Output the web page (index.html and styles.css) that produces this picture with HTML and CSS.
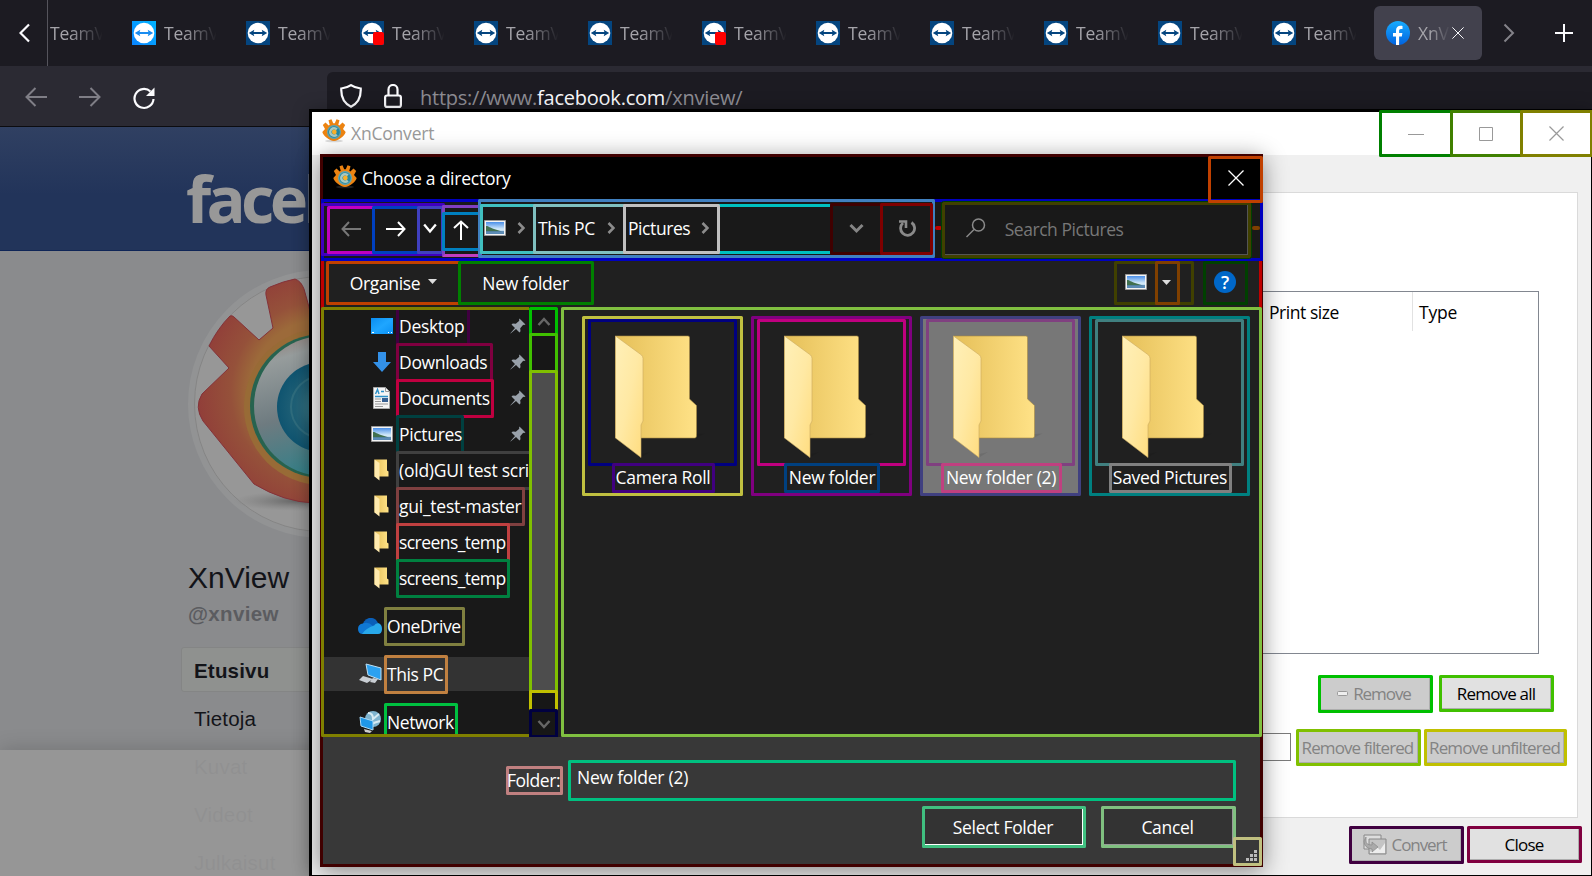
FILE: index.html
```
<!DOCTYPE html>
<html lang="en">
<head>
<meta charset="utf-8">
<title>XnConvert - Choose a directory</title>
<link rel="stylesheet" href="styles.css">
</head>
<body>
<svg class="defs" width="0" height="0">
  <defs>
    <linearGradient id="tvLight" x1="1" y1="0" x2="0" y2="1"><stop offset="0" stop-color="#00b4ff"/><stop offset="1" stop-color="#0a84ff"/></linearGradient>
    <linearGradient id="fb" x1="0" y1="0" x2="0" y2="1"><stop offset="0" stop-color="#18acfe"/><stop offset="1" stop-color="#0163e0"/></linearGradient>
    <linearGradient id="fBack" x1="0" y1="0" x2="1" y2="0"><stop offset="0" stop-color="#e5bf58"/><stop offset="1" stop-color="#ffe287"/></linearGradient>
    <linearGradient id="fFront" x1="0" y1="0" x2="1" y2="1"><stop offset="0" stop-color="#fff0b8"/><stop offset=".5" stop-color="#ffe9a4"/><stop offset="1" stop-color="#ffdc7e"/></linearGradient>
    <linearGradient id="sky" x1="0" y1="0" x2="0" y2="1"><stop offset="0" stop-color="#4a8fe8"/><stop offset=".6" stop-color="#d5ebfa"/><stop offset="1" stop-color="#8fb6d8"/></linearGradient>
    <linearGradient id="desk" x1="0" y1="0" x2="1" y2="1"><stop offset="0" stop-color="#0a8df0"/><stop offset=".5" stop-color="#1fa6ff"/><stop offset="1" stop-color="#0a90f4"/></linearGradient>
    <radialGradient id="gear" gradientUnits="userSpaceOnUse" cx="134" cy="122" r="134"><stop offset=".54" stop-color="#9c6a3a"/><stop offset=".68" stop-color="#95513a"/><stop offset="1" stop-color="#903939"/></radialGradient>
    <linearGradient id="ring" x1="0" y1="0" x2=".3" y2="1"><stop offset="0" stop-color="#90766e"/><stop offset=".2" stop-color="#969c9c"/><stop offset=".6" stop-color="#6e7b80"/><stop offset="1" stop-color="#357f88"/></linearGradient>
    <radialGradient id="iris"><stop offset="0" stop-color="#45858f"/><stop offset=".5" stop-color="#256478"/><stop offset="1" stop-color="#0f5470"/></radialGradient>
    <radialGradient id="shade"><stop offset="0" stop-color="#555" stop-opacity=".8"/><stop offset="1" stop-color="#777" stop-opacity="0"/></radialGradient>
    <symbol id="tv" viewBox="0 0 24 24"><circle cx="12" cy="12" r="10.3" fill="#fff"/><path d="M2.8 12 8.3 8.8 7.6 11h8.8l-.7-2.2L21.2 12l-5.5 3.2.7-2.2H7.6l.7 2.2z" fill="currentColor"/></symbol>
    <symbol id="pic" viewBox="0 0 22 16"><path fill="#f4f4f4" stroke="#999" d="M.5.5h21v15H.5z"/><path fill="url(#sky)" d="M2 2h18v12H2z"/><path fill="#41704f" d="M2 6c3 0 4 2 8 3l8 2.500H2z"/><path fill="#3f73a4" d="M2 11h18v3H2z" opacity=".7"/></symbol>
    <symbol id="smallFolder" viewBox="0 0 16 22"><path d="M.5.5H13v11l1.500 1v5H.5z" fill="url(#fBack)"/><path d="M.5.5 5.500 4v17.500L.5 17.500z" fill="#ffeaae"/></symbol>
    <symbol id="bigFolder" viewBox="0 0 90 124"><path d="M.5 1H73a1.5 1.5 0 0 1 1.5 1.5V64l7 6.500V101a2 2 0 0 1-2 2H.5z" fill="url(#fBack)" stroke="#a98c45" stroke-width=".6"/><path d="m81.500 99 8-.5-8 4zM26 119l9-2-8 5z" fill="#000" opacity=".08"/><path d="M.5 1 26.500 20a5 5 0 0 1 1.500 3.500V86l-2 4v32.500L.5 103z" fill="url(#fFront)" stroke="#c9a95f" stroke-width=".6"/></symbol>
    <symbol id="pin" viewBox="0 0 16 16"><path d="m9.500.5 6 6-1.500.5-.8-.3-3 3.500.3 3-1 1.300L6 11 .6 15.500.4 15.300 5 10 1.500 6.500l1.300-1 3 .3 3.500-3L9 1.900z" fill="#99a1aa"/></symbol>
    <symbol id="crumb" viewBox="0 0 8 12"><path d="m1.500 1 5 5-5 5" fill="none" stroke="#8c8c8c" stroke-width="2.600"/></symbol>
    <symbol id="app" viewBox="0 0 24 24"><ellipse cx="12" cy="22" rx="9" ry="1.300" fill="#777" opacity=".25"/><path d="M.8 6 3.500 3.500l3.200 3 1-.8L6.500 1.300 9.500.3l1.700 4h1.600l1.700-4 3 1-1.200 4.400 1 .8 3.200-3L23.200 6l-2.200 4 2.700 3c-1 3.500-7 9-11.700 9S1.300 16.500.3 13L3 10z" fill="#ec8311"/><circle cx="12" cy="13" r="7" fill="#5fa5b3"/><circle cx="12" cy="13" r="5.800" fill="#2587a0"/><path d="M14.800 10.400a3.800 3.800 0 1 0 0 5.200" fill="none" stroke="#a9c9c2" stroke-width="2.400"/><circle cx="12.300" cy="13" r="2.400" fill="#f7b02a"/></symbol>
    <symbol id="down" viewBox="0 0 12 10"><path d="m1 2 5 6 5-6" fill="none" stroke="currentColor" stroke-width="2"/></symbol>
    <symbol id="x" viewBox="0 0 16 16"><path d="m.5.5 15 15m0-15-15 15" fill="none" stroke="currentColor" stroke-width="1.300"/></symbol>
  </defs>
</svg>

<div class="browser">
  <div class="tabs">
    <div class="scroll-left"><svg width="12" height="20" viewBox="0 0 12 20"><path d="m10 1.500-8.500 8.500 8.500 8.500" fill="none" stroke="#fbfbfe" stroke-width="2.200"/></svg></div>
    <div class="tab first"><span>TeamV</span></div>
    <div class="tab"><svg class="fav light"><rect width="24" height="24" fill="url(#tvLight)"/><use href="#tv"/></svg><span>TeamV</span></div>
    <div class="tab"><svg class="fav"><use href="#tv"/></svg><span>TeamV</span></div>
    <div class="tab"><svg class="fav"><use href="#tv"/><rect x="13" y="11" width="11" height="13" rx="2" fill="#f00"/></svg><span>TeamV</span></div>
    <div class="tab"><svg class="fav"><use href="#tv"/></svg><span>TeamV</span></div>
    <div class="tab"><svg class="fav"><use href="#tv"/></svg><span>TeamV</span></div>
    <div class="tab"><svg class="fav"><use href="#tv"/><rect x="13" y="11" width="11" height="13" rx="2" fill="#f00"/></svg><span>TeamV</span></div>
    <div class="tab"><svg class="fav"><use href="#tv"/></svg><span>TeamV</span></div>
    <div class="tab"><svg class="fav"><use href="#tv"/></svg><span>TeamV</span></div>
    <div class="tab"><svg class="fav"><use href="#tv"/></svg><span>TeamV</span></div>
    <div class="tab"><svg class="fav"><use href="#tv"/></svg><span>TeamV</span></div>
    <div class="tab"><svg class="fav"><use href="#tv"/></svg><span>TeamV</span></div>
    <div class="tab active"><svg class="fav none" viewBox="0 0 24 24"><circle cx="12" cy="12" r="12" fill="url(#fb)"/><path d="M10 24v-8.500H7V12h3V9.500C10 6.300 11.800 4.700 14.500 4.700c1 0 2 .2 2 .2V8H15c-1.400 0-1.900.8-1.900 1.800V12h3.300l-.6 3.500h-2.700V24z" fill="#fff"/></svg><span>XnV</span><svg class="tab-x" width="12" height="12"><use href="#x"/></svg></div>
    <svg class="scroll-right" width="12" height="20" viewBox="0 0 12 20"><path d="m1.500 1.500 8.500 8.500-8.500 8.500" fill="none" stroke="#84838a" stroke-width="2"/></svg>
    <svg class="plus" width="18" height="18"><path d="M9 0v18M0 9h18" stroke="#fbfbfe" stroke-width="2"/></svg>
  </div>
  <div class="nav">
    <svg width="22" height="20" viewBox="0 0 22 20"><path d="M22 10H2M10.500 1 1.500 10l9 9" fill="none" stroke="#7f7e86" stroke-width="2"/></svg>
    <svg width="22" height="20" viewBox="0 0 22 20"><path d="M0 10h20M11.500 1l9 9-9 9" fill="none" stroke="#7f7e86" stroke-width="2"/></svg>
    <svg class="reload" width="24" height="24" viewBox="0 0 24 24"><path d="M18.500 5.500A9.500 9.500 0 1 0 21.500 13" fill="none" stroke="#fbfbfe" stroke-width="2.200"/><path d="M22.500 1.500V10H14z" fill="#fbfbfe"/></svg>
    <div class="urlbar">
      <svg width="22" height="24" viewBox="0 0 22 24"><path d="M11 1.200c3 2.100 6.500 3 9.700 3.300.4 8-2 14.500-9.700 18.200C3.300 19 .9 12.500 1.300 4.500 4.500 4.200 8 3.300 11 1.200z" fill="none" stroke="#fbfbfe" stroke-width="2.200"/></svg>
      <svg width="18" height="24" viewBox="0 0 18 24"><path d="M4.500 11V5.500a4.500 4.500 0 0 1 9 0V11" fill="none" stroke="#fbfbfe" stroke-width="2.200"/><rect x="1.100" y="11.500" width="15.800" height="11.400" rx="2" fill="none" stroke="#fbfbfe" stroke-width="2.200"/></svg>
      <span class="url">https://www.<b>facebook.com</b>/xnview/</span>
    </div>
  </div>
  <div class="page">
    <div class="fb-head"><span>facebook</span></div>
    <div class="profile">
      <svg class="avatar" width="268" height="268" viewBox="0 0 268 268">
        <circle cx="134" cy="134" r="131" fill="#979797" stroke="#929394" stroke-width="6"/>
        <circle cx="134" cy="134" r="127.500" fill="none" stroke="#858585"/>
        <ellipse cx="110" cy="231" rx="65" ry="10" fill="url(#shade)"/>
        <path d="M14 124 41 98 21 76Q30 58 42 46q2-1 4 1l25 23 14-12-7-33q-1-6 4-8 14-6 25-8 6 2 9 10l5 18 5 24V233q-30-1-60-19L15 151q-9-14-1-27z" fill="url(#gear)" stroke="#843239" stroke-width="1"/>
        <circle cx="134" cy="137" r="78" fill="#986b36"/>
        <circle cx="134" cy="136" r="72" fill="#27634f"/>
        <circle cx="136" cy="136" r="70" fill="url(#ring)"/>
        <circle cx="134" cy="137" r="45" fill="url(#iris)"/>
        <circle cx="134" cy="137" r="31" fill="none" stroke="#2f6c7d" stroke-width="2"/>
      </svg>
      <h1>XnView</h1>
      <p class="handle">@xnview</p>
      <div class="fb-item on">Etusivu</div>
      <div class="fb-item">Tietoja</div>
      <div class="fb-item">Kuvat</div>
      <div class="fb-item">Videot</div>
      <div class="fb-item">Julkaisut</div>
    </div>
    <div class="sheet"></div>
  </div>
</div>

<div class="window">
  <div class="titlebar">
    <svg width="24" height="24"><use href="#app"/></svg><span class="wtitle">XnConvert</span>
    <div class="mark wbtn" style="border-color:#008000"><svg width="16" height="16"><path d="M0 8.500h16" stroke="#999"/></svg></div>
    <div class="mark wbtn mid" style="border-color:#408000"><svg width="16" height="16"><path d="M1.500 1.500h13v13h-13z" fill="none" stroke="#999"/></svg></div>
    <div class="mark wbtn last" style="border-color:#808000"><svg class="grey" width="15" height="15"><use href="#x"/></svg></div>
  </div>
  <div class="wbody">
    <div class="panel">
      <div class="table"><span class="col">Print size</span><span class="col type">Type</span></div>
      <div class="row first-row">
        <div class="mark btn off w115" style="border-color:#00c000"><svg width="12" height="6"><rect x=".5" y=".5" width="10" height="4" rx="1" fill="#eee" stroke="#999"/></svg>Remove</div>
        <div class="mark btn short w115" style="border-color:#40c000">Remove all</div>
      </div>
      <div class="row second-row">
        <div class="filter"></div>
        <div class="mark btn off tight w126" style="border-color:#80c000">Remove filtered</div>
        <div class="mark btn off tight w144" style="border-color:#c0c000">Remove unfiltered</div>
      </div>
    </div>
    <div class="row foot">
      <div class="mark btn off w115" style="border-color:#400040"><svg width="24" height="22" viewBox="0 0 24 22"><path d="M1 1h17v14H1z" fill="#ddd" stroke="#888"/><path d="M6 5h17v15H6z" fill="#c4c4c4" stroke="#888"/><path d="M7 18l6-6 4 4 5-7v10H7z" fill="#eee"/><path d="M3 3v4q0 4 6 4V8l6 5-6 5v-3Q1 14 1 7z" fill="#aaa" stroke="#888" stroke-width=".7"/></svg>Convert</div>
      <div class="mark btn short w115" style="border-color:#800040">Close</div>
    </div>
  </div>
</div>

<div class="dialog">
  <div class="dtitle"><svg width="24" height="24"><use href="#app"/></svg><span>Choose a directory</span>
    <div class="mark dclose"><svg width="16" height="16"><use href="#x"/></svg></div></div>
  <div class="addr">
    <div class="mark history">
      <div class="mark h48" style="border-color:#c000c0"><svg width="20" height="16" viewBox="0 0 20 16"><path d="M20 8H1.500M8 1 1.500 8 8 15" fill="none" stroke="#777" stroke-width="2"/></svg></div>
      <div class="mark h48" style="border-color:#0040c0"><svg width="20" height="16" viewBox="0 0 20 16"><path d="M0 8h18.500M12 1l6.500 7-6.500 7" fill="none" stroke="#fff" stroke-width="2"/></svg></div>
      <div class="mark h27" style="border-color:#4040c0"><svg class="white" width="14" height="12"><use href="#down"/></svg></div>
    </div>
    <div class="mark upbox"><div class="mark up"><svg width="16" height="20" viewBox="0 0 16 20"><path d="M8 20V1.500M1 8l7-6.500L15 8" fill="none" stroke="#fff" stroke-width="2"/></svg></div></div>
    <div class="mark band">
      <div class="mark crumbs">
        <div class="mark c1"><svg width="22" height="16"><use href="#pic"/></svg><svg width="8" height="12"><use href="#crumb"/></svg></div>
        <div class="mark c2"><span>This PC</span><svg width="8" height="12"><use href="#crumb"/></svg></div>
        <div class="mark c3"><span>Pictures</span><svg width="8" height="12"><use href="#crumb"/></svg></div>
      </div>
      <div class="mark a1"><svg width="15" height="11" viewBox="0 0 15 11"><path d="m1.500 2 6 6 6-6" fill="none" stroke="#858585" stroke-width="3"/></svg></div>
      <div class="mark a2"><svg width="18" height="18" viewBox="0 0 18 18"><path d="M13.500 2.500a7 7 0 1 1-8.500.5" fill="none" stroke="#8a8a8a" stroke-width="2.800"/><path d="M1 1.500h7v6.500" fill="none" stroke="#8a8a8a" stroke-width="2.600"/></svg></div>
    </div>
    <div class="dash"></div>
    <div class="mark search"><div class="field"><svg width="20" height="20" viewBox="0 0 20 20"><circle cx="12.500" cy="7" r="6" fill="none" stroke="#8a8a8a" stroke-width="1.500"/><path d="m8 11.500-7.500 7.500" stroke="#8a8a8a" stroke-width="1.500"/></svg><span>Search Pictures</span></div></div>
    <div class="dash brown"></div>
  </div>
  <div class="tools">
    <div class="mark organise"><span>Organise</span><svg width="9" height="5"><path d="M0 0h9L4.500 5z" fill="#ddd"/></svg></div>
    <div class="mark newf">New folder</div>
    <div class="mark views"><svg width="22" height="16"><use href="#pic"/></svg><div class="mark drop"><svg width="9" height="5"><path d="M0 0h9L4.500 5z" fill="#ddd"/></svg></div></div>
    <div class="mark help"><i>?</i></div>
  </div>
  <div class="main">
    <div class="mark tree">
      <div class="item"><svg width="22" height="16"><path d="M0 0h22v16H0z" fill="url(#desk)"/><path d="M1 14.500h2m14 0h1m2 0h1" stroke="#fff"/></svg><b class="mark" style="border-color:#400040;width:74px">Desktop</b><svg class="pin"><use href="#pin"/></svg></div>
      <div class="item"><svg width="22" height="20" viewBox="0 0 22 20"><path d="M7 0h8v10h5l-9 10L2 10h5z" fill="#3391e8"/></svg><b class="mark" style="border-color:#800040;width:97px">Downloads</b><svg class="pin"><use href="#pin"/></svg></div>
      <div class="item"><svg width="22" height="22" viewBox="0 0 22 22"><path d="M2.500.5h12l4 4v17h-16z" fill="#f5f5f5" stroke="#aaa"/><path d="M14.500.5v4h4" fill="none" stroke="#999"/><path d="m4.500 7 2-4.500 1.500 4.500M10 4.500h3M4 9.500h13" fill="none" stroke="#2b90c8" stroke-width="1.400"/><path d="M4 12h6m-6 2.500h6M4 17h13M4 19.500h8" stroke="#999"/><path d="M11 11h6v4h-6z" fill="#355f91"/></svg><b class="mark" style="border-color:#c00040;width:98px">Documents</b><svg class="pin"><use href="#pin"/></svg></div>
      <div class="item"><svg width="22" height="16"><use href="#pic"/></svg><b class="mark" style="border-color:#004040;width:68px">Pictures</b><svg class="pin"><use href="#pin"/></svg></div>
      <div class="item wide"><svg width="22" height="22" viewBox="0 0 22 22"><use href="#smallFolder" x="3" width="16" height="22"/></svg><b class="mark" style="border-color:#404040;width:136px">(old)GUI test scri</b></div>
      <div class="item wide"><svg width="22" height="22" viewBox="0 0 22 22"><use href="#smallFolder" x="3" width="16" height="22"/></svg><b class="mark" style="border-color:#804040;width:129px">gui_test-master</b></div>
      <div class="item narrow"><svg width="22" height="22" viewBox="0 0 22 22"><use href="#smallFolder" x="3" width="16" height="22"/></svg><b class="mark" style="border-color:#c04040;width:114px">screens_temp</b></div>
      <div class="item narrow"><svg width="22" height="22" viewBox="0 0 22 22"><use href="#smallFolder" x="3" width="16" height="22"/></svg><b class="mark" style="border-color:#008040;width:114px">screens_temp</b></div>
      <div class="item root"><svg width="24" height="16" viewBox="0 0 24 16"><path d="M4 9Q5 2 11 0q6-1 9 5l-8 6z" fill="#0a5fb8"/><path d="M0 11q0-5 5-5.500Q10 3 15 8l-8 8H5q-5 0-5-5z" fill="#0f78d4"/><path d="M4 16q4-6 12-8.500 1-2 4-2.500 4 1 4 6 0 5-4 5z" fill="#28a8ea"/></svg><b class="mark" style="border-color:#808040;width:81px">OneDrive</b></div>
      <div class="item root sel"><svg width="24" height="22" viewBox="0 0 24 22"><path d="m8 1 15 4v12L10 12z" fill="#2ba1f0" stroke="#bce0f5"/><path d="m5 13 10 3-6 4-8-3zM15 15l5 1-3 4-5-1z" fill="#c9ced3"/></svg><b class="mark" style="border-color:#c08040;width:64px">This PC</b></div>
      <div class="item root"><svg width="24" height="24" viewBox="0 0 24 24"><circle cx="15" cy="9" r="8" fill="#7fb4cf"/><path d="M10 3q5 0 5 6l6-5M12 15q5-3 10-4" stroke="#d7eaf2" fill="none" stroke-width="2"/><path d="m2 7 13 4v9L3 16z" fill="#1f97e8" stroke="#a9d9f5"/><path d="m6 19 8 2-2 2-5-1z" fill="#ccc"/></svg><b class="mark" style="border-color:#00c040;width:74px">Network</b></div>
    </div>
    <div class="scroll">
      <div class="mark" style="border-color:#00c000;height:29px"><svg width="14" height="12" viewBox="0 0 14 12"><path d="m1.500 9 5.500-6 5.500 6" fill="none" stroke="#666" stroke-width="2.500"/></svg></div>
      <div class="mark" style="border-color:#40c000;height:40px"></div>
      <div class="mark thumb" style="border-color:#80c000;height:323px"></div>
      <div class="mark" style="border-color:#c0c000;height:22px"></div>
      <div class="mark" style="border-color:#000040;height:29px"><svg width="14" height="12" viewBox="0 0 14 12"><path d="m1.500 3 5.500 6 5.500-6" fill="none" stroke="#666" stroke-width="2.500"/></svg></div>
    </div>
    <div class="mark list">
      <div class="mark tile" style="border-color:#c0c040"><div class="mark pic" style="border-color:#000080"><svg width="90" height="124"><use href="#bigFolder"/></svg></div><div class="mark name" style="border-color:#400080;width:103px">Camera Roll</div></div>
      <div class="mark tile" style="border-color:#800080"><div class="mark pic" style="border-color:#c00080"><svg width="90" height="124"><use href="#bigFolder"/></svg></div><div class="mark name" style="border-color:#004080;width:96px">New folder</div></div>
      <div class="mark tile picked" style="border-color:#404080"><div class="mark pic" style="border-color:#804080"><svg width="90" height="124"><use href="#bigFolder"/></svg></div><div class="mark name" style="border-color:#c04080;width:121px">New folder (2)</div></div>
      <div class="mark tile" style="border-color:#008080"><div class="mark pic" style="border-color:#408080"><svg width="90" height="124"><use href="#bigFolder"/></svg></div><div class="mark name" style="border-color:#808080;width:123px">Saved Pictures</div></div>
    </div>
  </div>
  <div class="bottom">
    <div class="line1"><div class="mark flabel">Folder:</div><div class="mark edit">New folder (2)</div></div>
    <div class="line2"><div class="mark choose">Select Folder</div><div class="mark cancel">Cancel</div></div>
    <div class="mark grip"><svg width="11" height="11"><path d="M8 0h3v3H8zM4 4h3v3H4zM8 4h3v3H8zM0 8h3v3H0zM4 8h3v3H4zM8 8h3v3H8z" fill="#bbb"/></svg></div>
  </div>
</div>
</body>
</html>
```
FILE: styles.css
```
* { box-sizing: border-box; }
body { margin: 0; width: 1592px; height: 876px; overflow: hidden; position: relative; background: #000; font: 17.5px/24px "Open Sans", "Noto Sans", sans-serif; letter-spacing: -.32px; white-space: nowrap; }
.defs { position: absolute; }
svg { display: block; flex: none; }
.mark { border: 3px solid; border-radius: 1.500px; flex: none; display: flex; align-items: center; justify-content: center; }

/* Browser */
.browser { height: 876px; overflow: hidden; }
.tabs { height: 66px; background: #1c1b22; display: flex; align-items: center; color: #a5a4aa; }
.scroll-left { width: 48px; height: 66px; border-right: 1px solid #55545c; display: flex; align-items: center; padding-left: 19px; }
.tab { width: 114px; display: flex; align-items: center; gap: 8px; flex: none; }
.tab.first { width: 84px; padding-left: 2px; }
.tab span { width: 56px; overflow: hidden; letter-spacing: -.2px; -webkit-mask: linear-gradient(90deg, #000 35%, transparent 94%); mask: linear-gradient(90deg, #000 35%, transparent 94%); }
.fav { width: 24px; height: 24px; background: #04457f; color: #04457f; }
.fav.light { color: #1a8cf0; background: none; }
.fav.none { background: none; }
.tab.active { width: 108px; height: 54px; margin-left: -12px; padding-left: 12px; background: #42414d; border-radius: 6px; }
.tab.active span { width: 34px; }
.tab-x { margin-left: -8px; color: #fbfbfe; }
.scroll-right { margin-left: 21px; }
.plus { margin-left: 40px; }
.nav { height: 60px; background: #2b2a33; display: flex; align-items: center; gap: 32px; padding-left: 25px; }
.nav > svg { margin-bottom: -2px; }
.nav > .reload { margin-left: -1px; margin-bottom: -3px; }
.urlbar { align-self: flex-end; width: 1300px; height: 54px; margin-left: 139px; background: #1c1b22; border-radius: 6px 0 0; display: flex; gap: 22px; padding: 0 0 6px 13px; align-items: center; }
.url { color: #8e8d94; font-size: 20px; margin: 3px 0 0 -4px; letter-spacing: -.24px; }
.url b { color: #fbfbfe; font-weight: 400; }
.page { height: 750px; background: #8a8b8d; font-family: "Liberation Sans", Arial, sans-serif; letter-spacing: 0; position: relative; border-top: 1px solid #0c0c10; }
.fb-head { height: 124px; background: linear-gradient(#304062, #22345a 55%); border-bottom: 1px solid #0f2557; padding: 38px 0 0 186px; }
.fb-head span { font: bold 65px/66px "Open Sans", sans-serif; letter-spacing: -4.700px; color: #989898; }
.profile { padding-left: 188px; color: #131419; }
.avatar { margin-top: 19px; }
h1 { font-size: 30px; line-height: 34px; font-weight: 400; margin: 23px 0 0; letter-spacing: 0; }
.handle { font-size: 20.500px; line-height: 24px; font-weight: 700; color: #5b5c60; margin: 7px 0 21px; letter-spacing: .35px; }
.fb-item { font-size: 20.500px; height: 48px; line-height: 50px; padding-left: 6px; letter-spacing: .2px; }
.fb-item.on { font-weight: 700; margin-left: -7px; padding-left: 12px; height: 45px; line-height: 45px; margin-bottom: 2px; background: #8f918f; border: 1px solid #848585; border-radius: 3px; }
.sheet { position: absolute; left: 0; right: 0; top: 623px; bottom: 0; background: rgba(150,150,150,.955); box-shadow: 0 0 20px rgba(0,0,0,.18); }

/* Application window */
.window { position: absolute; left: 309px; top: 109px; width: 1283px; height: 767px; background: #f0f0f0; border: solid #000; border-width: 3px 1px 1px 3px; box-shadow: 0 0 16px rgba(0,0,0,.25); }
.titlebar { height: 43px; background: #fff; display: flex; align-items: flex-start; padding: 7px 0 0 10px; }
.wtitle { color: #999; margin: 2px auto 0 5px; letter-spacing: -.2px; }
.wbtn { width: 74px; height: 47px; margin: -9px 0 -10px; }
.wbtn.mid { width: 73px; margin-left: -3px; padding-right: 1px; }
.wbtn.last { width: 73px; margin: -9px -2px -10px -3px; }
.grey { color: #999; }
.wbody { padding-top: 37px; }
.panel { width: 1250px; height: 626px; margin-left: 16px; background: #fff; border: 1px solid #dadada; padding-top: 98px; }
.table { width: 1202px; height: 363px; margin-left: 8px; border: 1px solid #828790; display: flex; padding-left: 931px; }
.col { flex: none; width: 144px; height: 39px; padding-top: 8px; border-right: 1px solid #e2e2e2; letter-spacing: -.45px; }
.col.type { border: 0; padding-left: 6px; width: 120px; letter-spacing: -.2px; }
.row { display: flex; justify-content: flex-end; }
.first-row { margin: 21px 23px 0 0; gap: 6px; }
.second-row { margin: 16px 10px 0 0; gap: 3px; }
.filter { width: 900px; height: 28px; border: 1px solid #7a7a7a; margin: 4px 2px 0 0; }
.foot { margin: 8px 9px 0 0; gap: 3px; }
.btn { height: 38px; background: #e1e1e1; box-shadow: inset -1px -1px #adadad; color: #000; font-size: 17px; letter-spacing: -.8px; gap: 4px; padding-right: 1px; }
.btn.short { height: 37px; }
.btn.off { background: #ccc; color: #838383; }
.btn.off.w115 { letter-spacing: -1.050px; padding-right: 3px; }
.btn.tight { letter-spacing: -.9px; padding-right: 2px; height: 37px; }
.w115 { width: 115px; }
.w126 { width: 125px; }
.w144 { width: 143px; }

/* Directory dialog */
.dialog { position: absolute; left: 320px; top: 154px; width: 943px; height: 713px; border: 3px solid #400000; background: #202020; color: #fff; box-shadow: 0 4px 22px rgba(0,0,0,.45); }
.dtitle { height: 42px; background: #000; display: flex; align-items: center; padding-left: 10px; gap: 5px; letter-spacing: -.24px; }
.dtitle > svg { margin-bottom: 3px; }
.dclose { width: 55px; height: 47px; border-color: #c04000; margin: -1px -3px -3px auto; padding: 0 0 2px 0; position: relative; z-index: 3; }
.addr { height: 62px; margin: 0 -3px 0 -2px; border: 3px solid #0000c0; background: #191919; display: flex; align-items: flex-start; }
.history { width: 124px; height: 53px; margin: 1px 0 0 -3px; border-color: #4000c0; justify-content: flex-start; padding-left: 3px; }
.h48 { width: 48px; height: 48px; margin-right: -3px; padding-bottom: 2px; }
.h27 { width: 27px; height: 48px; padding: 0 1px 3px 0; }
.white { color: #fff; }
.upbox { width: 40px; height: 52px; margin: 3px 0 0 -3px; border-color: #8040c0 #8040c0 #c040c0; }
.up { width: 40px; height: 39px; border-color: #0080c0; padding: 0 2px 2px 0; }
.band { width: 457px; height: 59px; margin: -3px 0 0 -4px; border-color: #4080c0; justify-content: flex-start; position: relative; }
.crumbs { width: 353px; height: 50px; margin-left: -1px; border-color: #00c0c0; justify-content: flex-start; padding: 0; }
.crumbs .mark { height: 50px; justify-content: space-between; }
.crumbs .c1 { width: 56px; margin-left: -3px; border-color: #40c0c0; padding: 0 8px 1px 1px; }
.crumbs .c2 { width: 93px; margin-left: -3px; border-color: #80c0c0; padding: 0 8px 1px 2px; }
.crumbs .c3 { width: 97px; margin-left: -3px; border-color: #c0c0c0; padding: 0 8px 1px 2px; letter-spacing: -.42px; }
.crumbs span { margin-bottom: 1px; }
.a1 { width: 53px; height: 52px; margin-left: -3px; border-color: #400000; }
.a2 { width: 53px; height: 52px; margin-left: -3px; border-color: #800000; }
.dash { width: 8px; height: 4px; border-radius: 2px; background: #c00000; margin-top: 24px; }
.dash.brown { width: 10px; background: #804000; margin-left: 1px; }
.search { width: 309px; height: 56px; margin-top: 0; border-color: #404000; outline: 1px solid #004000; }
.field { width: 303px; height: 50px; border: solid #555; border-width: 0 1px 1px 0; display: flex; align-items: center; padding: 0 0 2px 21px; gap: 19px; color: #777; letter-spacing: -.45px; }
.field svg { margin-bottom: 2px; }
.tools { height: 48px; margin: 0 -2px; border: solid #c00000; border-width: 0 3px; display: flex; align-items: flex-start; }
.tools .mark { height: 44px; }
.organise { width: 135px; border-color: #c04000; margin-left: 2px; gap: 8px; }
.organise svg { margin-bottom: 4px; }
.newf { width: 136px; margin-left: -3px; padding-right: 1px; border-color: #008000; }
.views { width: 80px; border-color: #404000; margin-left: auto; justify-content: flex-start; padding-left: 8px; gap: 8px; }
.views > svg { margin-bottom: 2px; }
.drop { width: 25px; border-color: #804000; padding: 0 3px 2px 0; }
.help { width: 45px; border-color: #004000; margin: 0 11px 0 9px; padding: 0 1px 2px 0; }
.help i { width: 22px; height: 22px; border-radius: 50%; background: #0067c8; font: 600 18px/22px "Open Sans", sans-serif; text-align: center; }
.main { height: 430px; margin: -2px -2px 0; display: flex; }
.tree { width: 237px; height: 430px; border-color: #808000; background: #191919; flex-direction: column; align-items: stretch; justify-content: flex-start; overflow: hidden; }
.item { height: 36px; padding-left: 47px; display: flex; align-items: center; flex: none; letter-spacing: -.32px; }
.item.narrow { letter-spacing: -.55px; }
.item.wide { letter-spacing: -.24px; }
.item:first-child { margin-top: -1px; }
.item > svg { margin-bottom: 2px; }
.item b { font-weight: 400; height: 39px; margin: -2px 0 -1px 3px; justify-content: flex-start; padding: 0 0 2px 0; }
.item.root { margin-top: 12px; padding-left: 34px; letter-spacing: -.42px; }
.item.root b { margin-left: 2px; }
.item.sel { background: linear-gradient(#333, #333) 0 0 / 100% 34px no-repeat; }
.item .pin { width: 16px; height: 16px; margin-left: auto; margin-right: 29px; }
.scroll { width: 29px; margin-left: -29px; background: #171717; flex: none; position: relative; }
.scroll .mark + .mark { margin-top: -3px; }
.scroll .mark { position: relative; }
.scroll .thumb { background: #4d4d4d; }
.list { width: 701px; height: 430px; margin-left: 3px; border-color: #80c040; justify-content: flex-start; align-items: flex-start; padding: 6px 0 0 18px; gap: 8px; }
.tile { width: 161px; height: 180px; flex-direction: column; justify-content: flex-start; }
.pic { width: 149px; height: 147px; padding-top: 8px; }
.pic svg { margin-left: -5px; }
.name { height: 30px; margin: -3px 0 0 1px; padding-bottom: 2px; position: relative; }
.picked { background: #777; }
.bottom { height: 127px; background: #383838; position: relative; }
.line1 { display: flex; padding: 23px 0 0 183px; align-items: flex-start; }
.flabel { width: 57px; height: 29px; margin-top: 6px; border-color: #c08080; letter-spacing: -.45px; padding: 0 2px 1px 0; }
.edit { width: 668px; height: 41px; margin-left: 5px; border-color: #00c080; justify-content: flex-start; padding: 0 0 7px 6px; letter-spacing: -.24px; }
.line2 { display: flex; justify-content: flex-end; gap: 15px; padding: 5px 24px 0 0; }
.choose { width: 164px; height: 42px; border-color: #40c080; background: #333; box-shadow: inset -1px -1px #fff; padding-right: 2px; }
.cancel { width: 135px; height: 42px; border-color: #80c080; background: #333; box-shadow: inset -1px -1px #999; padding-right: 2px; }
.grip { position: absolute; right: -2px; bottom: -2px; width: 29px; height: 29px; border-color: #c0c080; padding: 8px 0 0 8px; }
```
